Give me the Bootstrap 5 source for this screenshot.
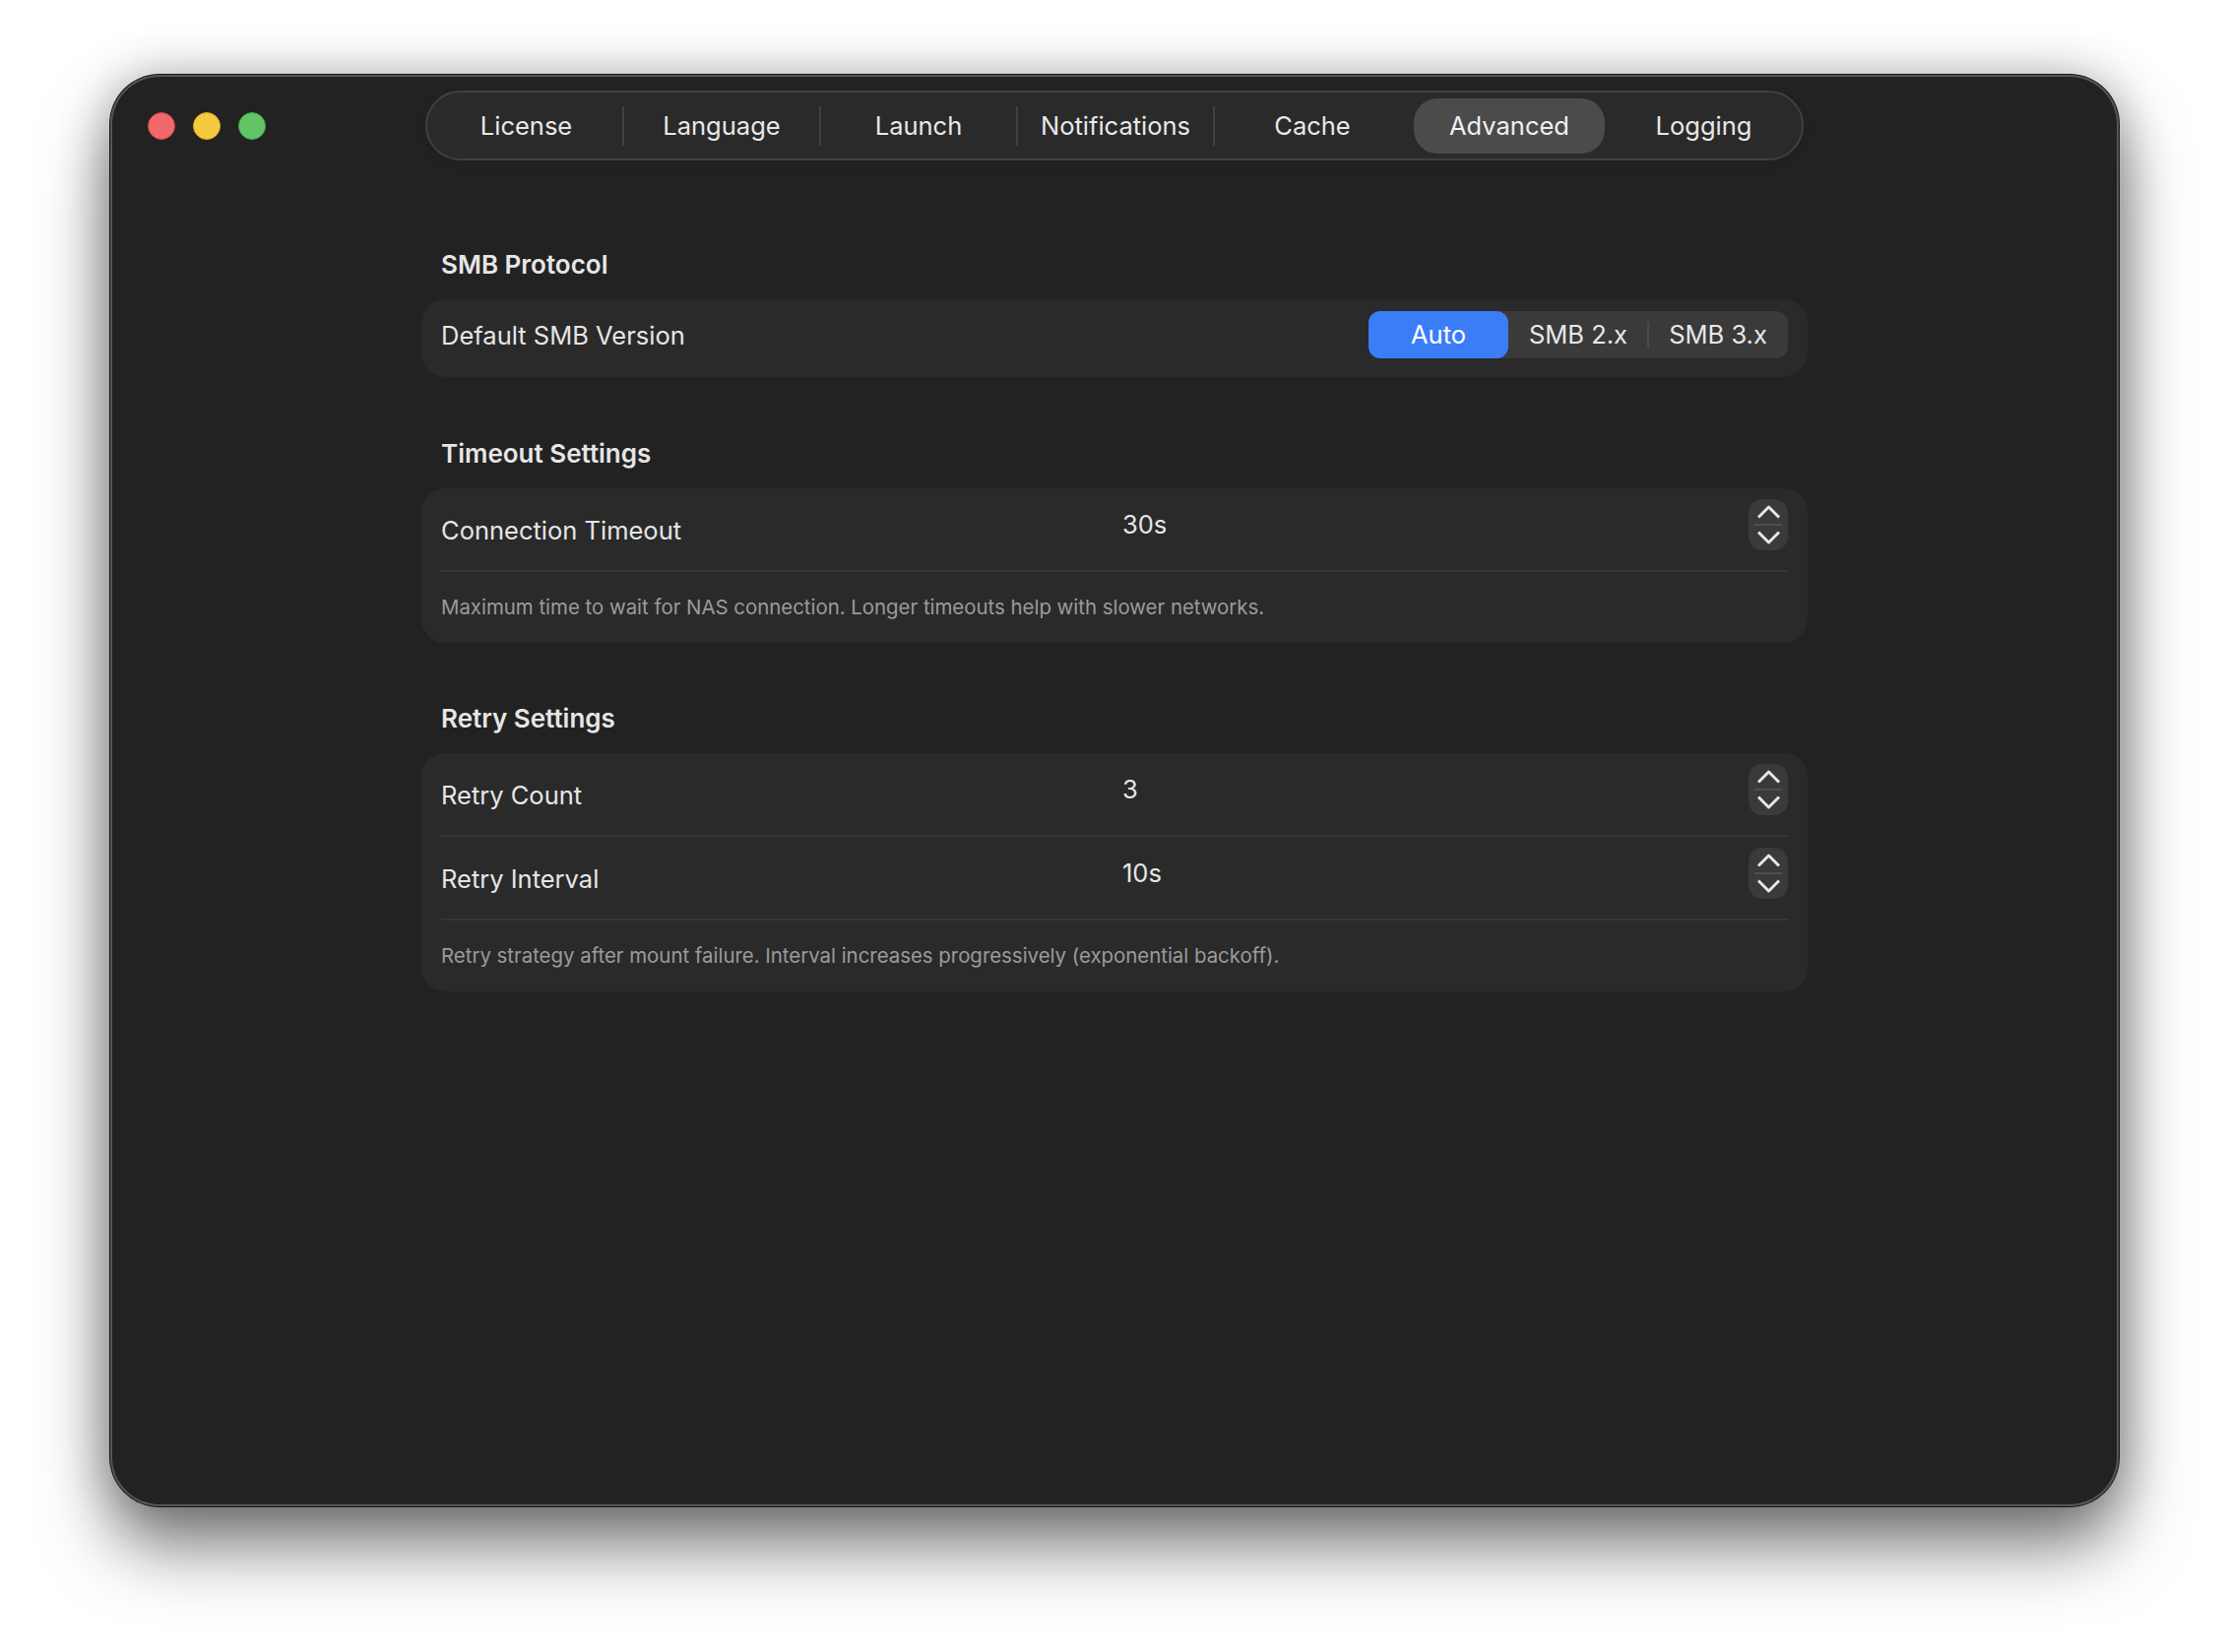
<!DOCTYPE html>
<html lang="en">
<head>
    <meta charset="UTF-8">
    <meta name="viewport" content="width=device-width, initial-scale=1.0">
    <title>Advanced Settings</title>
    <link href="https://cdn.jsdelivr.net/npm/bootstrap@5.3.0/dist/css/bootstrap.min.css" rel="stylesheet">
    <style>
        body {
            background-color: #fff;
            font-family: Inter, "Noto Sans", sans-serif;
            font-size: 25.5px;
            color: #e6e6e6;
            padding: 76px 112px 148px;
            height: 1678px;
            overflow: hidden;
        }
        .app-window {
            height: 1454px;
            background-color: #222;
            border-radius: 50px;
            box-shadow: inset 0 0 0 2px #565656, 0 0 0 1px #111, 0 42px 70px rgba(0, 0, 0, .5), 0 0 50px rgba(0, 0, 0, .28);
        }
        .title-bar {
            display: grid;
            grid-template-columns: 1fr 1400px 1fr;
            padding-top: 16px;
            margin-bottom: 87px;
        }
        .lights {
            padding-left: 38px;
            gap: 18px;
        }
        .light {
            width: 28px;
            height: 28px;
            border-radius: 50%;
            border: 1.5px solid;
        }
        .light-red { background-color: #f1696c; border-color: #d93f43; }
        .light-yellow { background-color: #f4ca40; border-color: #e3a922; }
        .light-green { background-color: #62c466; border-color: #3dab48; }

        .tab-bar {
            height: 71px;
            background-color: #2a2a2a;
            border: 2px solid #404040;
            border-radius: 36px;
            flex-wrap: nowrap;
            box-shadow: 0 4px 12px rgba(0, 0, 0, .08);
        }
        .tab-cell {
            width: 200px;
            flex: none;
            display: flex;
            align-items: center;
            position: relative;
        }
        .tab-cell:first-child {
            margin-left: -1px;
            padding-left: 3px;
        }
        .tab-cell:last-child {
            padding-right: 5px;
        }
        .tab-bar .nav-link {
            width: 100%;
            height: 56px;
            margin: 0 3px;
            padding: 0;
            line-height: 56px;
            text-align: center;
            color: #e8e8e8;
            font-size: 25.5px;
            border-radius: 24px;
        }
        .tab-bar .nav-link.active {
            background-color: #4b4b4b;
            color: #f0f0f0;
        }
        .tab-sep::after {
            content: "";
            position: absolute;
            right: -1px;
            top: 14px;
            width: 2px;
            height: 40px;
            background-color: #414141;
        }

        .content-col {
            width: 1408px;
            margin: 0 auto;
        }
        .group-title {
            font-size: 26px;
            font-weight: 600;
            line-height: 38px;
            padding-left: 20px;
            margin: 0 0 16px;
            color: #e6e6e6;
        }
        .group-panel {
            background-color: #2a2a2a;
            border-radius: 24px;
            margin-bottom: 58px;
            padding: 0 20px;
        }
        .group-panel:first-of-type {
            margin-bottom: 59px;
        }
        .row-select {
            height: 79px;
            padding-bottom: 6px;
        }
        .row-select-label {
            padding-top: 2px;
        }
        .row-input {
            height: 85px;
            border-bottom: 2px solid #363636;
        }
        .row-label {
            width: 692px;
            flex: none;
            line-height: 36px;
            padding-top: 25px;
        }
        .row-value {
            line-height: 36px;
            padding-top: 19px;
        }
        .row-note {
            height: 72px;
            color: #9b9b9b;
            font-size: 20.4px;
        }

        .seg-control {
            background-color: #3a3a3a;
            border-radius: 12px;
            height: 48px;
            margin-bottom: 2px;
        }
        .seg-control .btn {
            width: 142px;
            flex: none;
            padding: 0;
            line-height: 48px;
            border: 0;
            color: #e8e8e8;
            font-size: 25.5px;
            position: relative;
        }
        .seg-control.btn-group > .btn + .btn {
            margin-left: 0;
        }
        .seg-control.btn-group > .btn.btn-primary {
            background-color: #3b7df6;
            color: #fff;
            border-radius: 12px;
        }
        .seg-split::after {
            content: "";
            position: absolute;
            right: -1px;
            top: 11px;
            width: 2px;
            height: 26px;
            background-color: #4a4a4a;
        }

        .stepper {
            width: 40px;
            height: 52px;
            margin-top: 11px;
            background-color: #3a3a3a;
            border-radius: 14px;
        }
        .stepper svg {
            display: block;
        }
    </style>
</head>
<body>
    <div class="app-window">
        <div class="title-bar">
            <div class="lights d-flex align-items-center">
                <span class="light light-red"></span>
                <span class="light light-yellow"></span>
                <span class="light light-green"></span>
            </div>
            <ul class="nav nav-pills tab-bar">
                <li class="tab-cell tab-sep"><a class="nav-link" href="#">License</a></li>
                <li class="tab-cell tab-sep"><a class="nav-link" href="#">Language</a></li>
                <li class="tab-cell tab-sep"><a class="nav-link" href="#">Launch</a></li>
                <li class="tab-cell tab-sep"><a class="nav-link" href="#">Notifications</a></li>
                <li class="tab-cell"><a class="nav-link" href="#">Cache</a></li>
                <li class="tab-cell"><a class="nav-link active" href="#">Advanced</a></li>
                <li class="tab-cell"><a class="nav-link" href="#">Logging</a></li>
            </ul>
        </div>

        <div class="content-col">
            <h6 class="group-title">SMB Protocol</h6>
            <div class="group-panel">
                <div class="row-select d-flex align-items-center justify-content-between">
                    <span class="row-select-label">Default SMB Version</span>
                    <div class="seg-control btn-group" role="group">
                        <button type="button" class="btn btn-primary">Auto</button>
                        <button type="button" class="btn seg-split">SMB 2.x</button>
                        <button type="button" class="btn">SMB 3.x</button>
                    </div>
                </div>
            </div>

            <h6 class="group-title">Timeout Settings</h6>
            <div class="group-panel">
                <div class="row-input d-flex align-items-start">
                    <div class="row-label">Connection Timeout</div>
                    <div class="row-value flex-grow-1">30s</div>
                    <div class="stepper">
                        <svg width="40" height="52" viewBox="0 0 40 52" fill="none" stroke="#e6e6e6" stroke-width="3" stroke-linejoin="round">
                            <path d="M10 18.500L20.500 8L31 18.500"/>
                            <path d="M6 26H34" stroke="#4e4e4e" stroke-width="2"/>
                            <path d="M10 33.500L20.500 44L31 33.500"/>
                        </svg>
                    </div>
                </div>
                <div class="row-note d-flex align-items-center">Maximum time to wait for NAS connection. Longer timeouts help with slower networks.</div>
            </div>

            <h6 class="group-title">Retry Settings</h6>
            <div class="group-panel">
                <div class="row-input d-flex align-items-start">
                    <div class="row-label">Retry Count</div>
                    <div class="row-value flex-grow-1">3</div>
                    <div class="stepper">
                        <svg width="40" height="52" viewBox="0 0 40 52" fill="none" stroke="#e6e6e6" stroke-width="3" stroke-linejoin="round">
                            <path d="M10 18.500L20.500 8L31 18.500"/>
                            <path d="M6 26H34" stroke="#4e4e4e" stroke-width="2"/>
                            <path d="M10 33.500L20.500 44L31 33.500"/>
                        </svg>
                    </div>
                </div>
                <div class="row-input d-flex align-items-start">
                    <div class="row-label">Retry Interval</div>
                    <div class="row-value flex-grow-1">10s</div>
                    <div class="stepper">
                        <svg width="40" height="52" viewBox="0 0 40 52" fill="none" stroke="#e6e6e6" stroke-width="3" stroke-linejoin="round">
                            <path d="M10 18.500L20.500 8L31 18.500"/>
                            <path d="M6 26H34" stroke="#4e4e4e" stroke-width="2"/>
                            <path d="M10 33.500L20.500 44L31 33.500"/>
                        </svg>
                    </div>
                </div>
                <div class="row-note d-flex align-items-center">Retry strategy after mount failure. Interval increases progressively (exponential backoff).</div>
            </div>
        </div>
    </div>
    <script src="https://cdn.jsdelivr.net/npm/bootstrap@5.3.0/dist/js/bootstrap.bundle.min.js"></script>
</body>
</html>
